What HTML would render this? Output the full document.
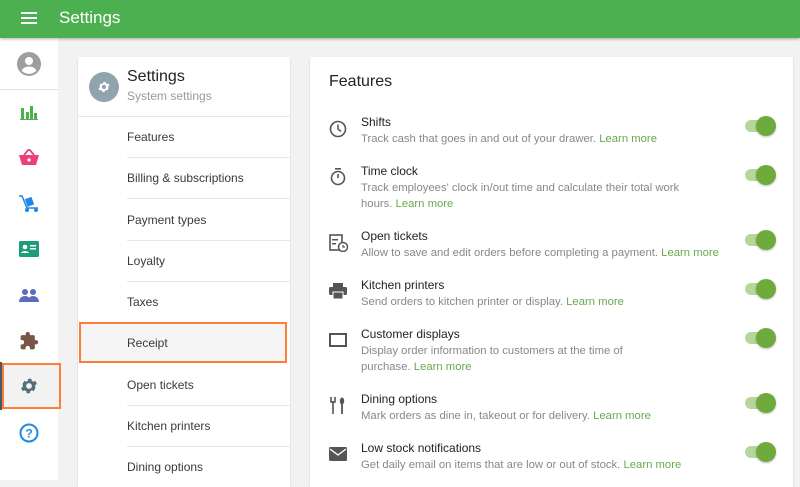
<!DOCTYPE html>
<html><head><meta charset="utf-8"><style>
*{margin:0;padding:0;box-sizing:border-box}
body{width:800px;height:480px;overflow:hidden;background:#f2f2f2;font-family:"Liberation Sans",Arial,sans-serif;position:relative}
.a{position:absolute}
.hdr{left:0;top:0;width:800px;height:38px;background:#4caf50;box-shadow:0 1px 3px rgba(0,0,0,.3);z-index:2}
.side{left:0;top:38px;width:58px;height:442px;background:#fff}
.card{background:#fff;box-shadow:0 1px 2px rgba(0,0,0,.15)}
.mi{position:absolute;left:127px;font-size:12px;color:#3a3a3a}
.dv{position:absolute;left:127px;width:163px;height:1px;background:#e6e6e6}
.ft{position:absolute;left:361px;font-size:12px;color:#222}
.fd{position:absolute;left:361px;font-size:11.3px;color:#888;line-height:16px}
.fd b{font-weight:normal;color:#6aa84f}
.tg{position:absolute;left:745px;width:30px;height:12px;border-radius:6px;background:#b5d79a}
.tg:after{content:"";position:absolute;left:11px;top:-4px;width:20px;height:20px;border-radius:50%;background:#6eab3c;box-shadow:0 1px 2px rgba(0,0,0,.25)}
.ic{position:absolute;left:329px}
</style></head><body>
<div class="a hdr">
 <svg class="a" style="left:21px;top:11px" width="16" height="14"><rect y="1" width="16" height="2" fill="#fff"/><rect y="6" width="16" height="2" fill="#fff"/><rect y="11" width="16" height="2" fill="#fff"/></svg>
 <div class="a" style="left:59px;top:8px;font-size:17px;color:#fff">Settings</div>
</div>
<div class="a side">
 <div class="a" style="left:0;top:51px;width:58px;height:1px;background:#e0e0e0"></div>
</div>
<svg class="a" style="left:17px;top:52px" width="24" height="24" viewBox="0 0 24 24"><circle cx="12" cy="12" r="12" fill="#9e9e9e"/><circle cx="12" cy="9" r="4" fill="#fff"/><path d="M4.5 18.5c2-3 4.5-4 7.5-4s5.5 1 7.5 4a10 10 0 0 1-15 0z" fill="#fff"/></svg>
<svg class="a" style="left:20px;top:104px" width="18" height="16"><rect x="0" y="15" width="18" height="1" fill="#4caf50"/><rect x="1" y="4" width="3" height="12" fill="#4caf50"/><rect x="6" y="8" width="3" height="8" fill="#4caf50"/><rect x="10" y="2" width="3" height="14" fill="#4caf50"/><rect x="14" y="9" width="3" height="7" fill="#4caf50"/></svg>
<svg class="a" style="left:19px;top:149px" width="20" height="17"><path d="M5 6 L10 0 L15 6" stroke="#ec407a" stroke-width="1.8" fill="none"/><path d="M0 6h20l-3 10H3z" fill="#ec407a"/><circle cx="10" cy="11" r="1.6" fill="#fff"/></svg>
<svg class="a" style="left:19px;top:195px" width="20" height="18"><path d="M0 1h3l5 12h11" stroke="#1e88e5" stroke-width="1.5" fill="none"/><rect x="7" y="3" width="7" height="8" fill="#1e88e5" transform="rotate(-20 10 7)"/><circle cx="8" cy="15" r="2" fill="#1e88e5"/><circle cx="17" cy="15" r="2" fill="#1e88e5"/></svg>
<svg class="a" style="left:19px;top:241px" width="20" height="16"><rect width="20" height="16" rx="1.5" fill="#1f9c7a"/><circle cx="6" cy="6" r="2.3" fill="#fff"/><path d="M2 12c1-2.5 7-2.5 8 0z" fill="#fff"/><rect x="11" y="4" width="6" height="1.5" fill="#fff"/><rect x="11" y="7" width="6" height="1.5" fill="#fff"/></svg>
<svg class="a" style="left:19px;top:289px" width="20" height="13"><circle cx="6" cy="3" r="3" fill="#5c6bc0"/><circle cx="14" cy="3" r="3" fill="#5c6bc0"/><path d="M0 13c0-4 3-6 6-6s6 2 6 6z" fill="#5c6bc0"/><path d="M9 13c0-4 2-6 5-6s6 2 6 6z" fill="#5c6bc0"/></svg>
<svg class="a" style="left:19px;top:331px" width="20" height="20" viewBox="0 0 24 24"><path d="M20.5 11H19V7a2 2 0 0 0-2-2h-4V3.5a2.5 2.5 0 0 0-5 0V5H4a2 2 0 0 0-2 2v3.8h1.5a2.7 2.7 0 0 1 0 5.4H2V20a2 2 0 0 0 2 2h3.8v-1.5a2.7 2.7 0 0 1 5.4 0V22H17a2 2 0 0 0 2-2v-4h1.5a2.5 2.5 0 0 0 0-5z" fill="#795548"/></svg>
<div class="a" style="left:0;top:362px;width:2px;height:48px;background:#455a64"></div>
<div class="a" style="left:2px;top:363px;width:59px;height:46px;background:#f2f2f2;border:2px solid #ff7d3a"></div>
<svg class="a" style="left:19px;top:376px" width="20" height="20" viewBox="0 0 24 24"><path d="M19.4 13a7.5 7.5 0 0 0 0-2l2.1-1.6-2-3.5-2.5 1a7.3 7.3 0 0 0-1.7-1l-.4-2.6h-4l-.4 2.6a7.3 7.3 0 0 0-1.7 1l-2.5-1-2 3.5L4.6 11a7.5 7.5 0 0 0 0 2l-2.1 1.6 2 3.5 2.5-1a7.3 7.3 0 0 0 1.7 1l.4 2.6h4l.4-2.6a7.3 7.3 0 0 0 1.7-1l2.5 1 2-3.5zM12 15.5a3.5 3.5 0 1 1 0-7 3.5 3.5 0 0 1 0 7z" fill="#546e7a"/></svg>
<svg class="a" style="left:19px;top:423px" width="20" height="20"><circle cx="10" cy="10" r="8.5" stroke="#1e88e5" stroke-width="2" fill="none"/><text x="10" y="14.5" font-size="12" font-weight="bold" text-anchor="middle" fill="#1e88e5" font-family="Liberation Sans">?</text></svg>

<div class="a card" style="left:78px;top:57px;width:212px;height:430px"></div>
<svg class="a" style="left:89px;top:72px" width="30" height="30" viewBox="0 0 30 30"><circle cx="15" cy="15" r="15" fill="#90a4ae"/><g transform="translate(8 8) scale(.58)"><path d="M19.4 13a7.5 7.5 0 0 0 0-2l2.1-1.6-2-3.5-2.5 1a7.3 7.3 0 0 0-1.7-1l-.4-2.6h-4l-.4 2.6a7.3 7.3 0 0 0-1.7 1l-2.5-1-2 3.5L4.6 11a7.5 7.5 0 0 0 0 2l-2.1 1.6 2 3.5 2.5-1a7.3 7.3 0 0 0 1.7 1l.4 2.6h4l.4-2.6a7.3 7.3 0 0 0 1.7-1l2.5 1 2-3.5zM12 15.5a3.5 3.5 0 1 1 0-7 3.5 3.5 0 0 1 0 7z" fill="#fff"/></g></svg>
<div class="a" style="left:127px;top:68px;font-size:16px;color:#222">Settings</div>
<div class="a" style="left:127px;top:89px;font-size:12px;color:#999">System settings</div>
<div class="a" style="left:78px;top:116px;width:212px;height:1px;background:#e6e6e6"></div>
<div class="a" style="left:79px;top:322px;width:208px;height:41px;background:#f5f5f5;border:2px solid #ff7d3a"></div>
<div class="mi" style="top:130px">Features</div>
<div class="dv" style="top:157px"></div>
<div class="mi" style="top:171px">Billing &amp; subscriptions</div>
<div class="dv" style="top:198px"></div>
<div class="mi" style="top:213px">Payment types</div>
<div class="dv" style="top:240px"></div>
<div class="mi" style="top:254px">Loyalty</div>
<div class="dv" style="top:281px"></div>
<div class="mi" style="top:295px">Taxes</div>
<div class="mi" style="top:336px">Receipt</div>
<div class="mi" style="top:378px">Open tickets</div>
<div class="dv" style="top:405px"></div>
<div class="mi" style="top:419px">Kitchen printers</div>
<div class="dv" style="top:446px"></div>
<div class="mi" style="top:460px">Dining options</div>

<div class="a card" style="left:310px;top:57px;width:483px;height:430px"></div>
<div class="a" style="left:329px;top:73px;font-size:16px;color:#222">Features</div>

<svg class="ic" style="top:120px" width="18" height="18"><circle cx="9" cy="9" r="7.5" stroke="#555" stroke-width="1.6" fill="none"/><path d="M9 4.5V9l3 2.5" stroke="#555" stroke-width="1.5" fill="none"/></svg>
<div class="ft" style="top:115px">Shifts</div>
<div class="fd" style="top:131px">Track cash that goes in and out of your drawer. <b>Learn more</b></div>
<div class="tg" style="top:120px"></div>

<svg class="ic" style="top:168px" width="18" height="18"><rect x="6" y="0" width="6" height="1.6" fill="#555"/><circle cx="9" cy="10" r="6.5" stroke="#555" stroke-width="1.6" fill="none"/><path d="M9 6v4" stroke="#555" stroke-width="1.6"/></svg>
<div class="ft" style="top:164px">Time clock</div>
<div class="fd" style="top:180px">Track employees' clock in/out time and calculate their total work<br>hours. <b>Learn more</b></div>
<div class="tg" style="top:169px"></div>

<svg class="ic" style="top:234px" width="20" height="18"><rect x="1" y="1" width="12" height="15" fill="none" stroke="#555" stroke-width="1.6"/><rect x="3" y="5" width="6" height="1.5" fill="#555"/><rect x="3" y="9" width="4" height="1.5" fill="#555"/><circle cx="14" cy="13" r="4.5" fill="#fff" stroke="#555" stroke-width="1.5"/><path d="M14 11v2h2" stroke="#555" stroke-width="1.2" fill="none"/></svg>
<div class="ft" style="top:229px">Open tickets</div>
<div class="fd" style="top:245px">Allow to save and edit orders before completing a payment. <b>Learn more</b></div>
<div class="tg" style="top:234px"></div>

<svg class="ic" style="top:283px" width="18" height="16"><rect x="4" y="0" width="10" height="4" fill="#555"/><rect x="0" y="4" width="18" height="8" rx="1.5" fill="#555"/><rect x="4" y="9" width="10" height="7" fill="#555" stroke="#fff" stroke-width="1"/></svg>
<div class="ft" style="top:278px">Kitchen printers</div>
<div class="fd" style="top:294px">Send orders to kitchen printer or display. <b>Learn more</b></div>
<div class="tg" style="top:283px"></div>

<svg class="ic" style="top:333px" width="18" height="14"><rect x="1" y="1" width="16" height="12" fill="none" stroke="#555" stroke-width="2"/></svg>
<div class="ft" style="top:327px">Customer displays</div>
<div class="fd" style="top:343px">Display order information to customers at the time of<br>purchase. <b>Learn more</b></div>
<div class="tg" style="top:332px"></div>

<svg class="ic" style="top:397px" width="18" height="17"><path d="M2 0v5h4V0M4 4v13" stroke="#555" stroke-width="1.6" fill="none"/><ellipse cx="13" cy="4" rx="2.2" ry="3.5" fill="#555"/><path d="M13 6v11" stroke="#555" stroke-width="1.8"/></svg>
<div class="ft" style="top:392px">Dining options</div>
<div class="fd" style="top:408px">Mark orders as dine in, takeout or for delivery. <b>Learn more</b></div>
<div class="tg" style="top:397px"></div>

<svg class="ic" style="top:447px" width="18" height="14"><rect width="18" height="14" rx="1.5" fill="#555"/><path d="M1 2l8 6 8-6" stroke="#fff" stroke-width="1.4" fill="none"/></svg>
<div class="ft" style="top:441px">Low stock notifications</div>
<div class="fd" style="top:457px">Get daily email on items that are low or out of stock. <b>Learn more</b></div>
<div class="tg" style="top:446px"></div>
</body></html>
